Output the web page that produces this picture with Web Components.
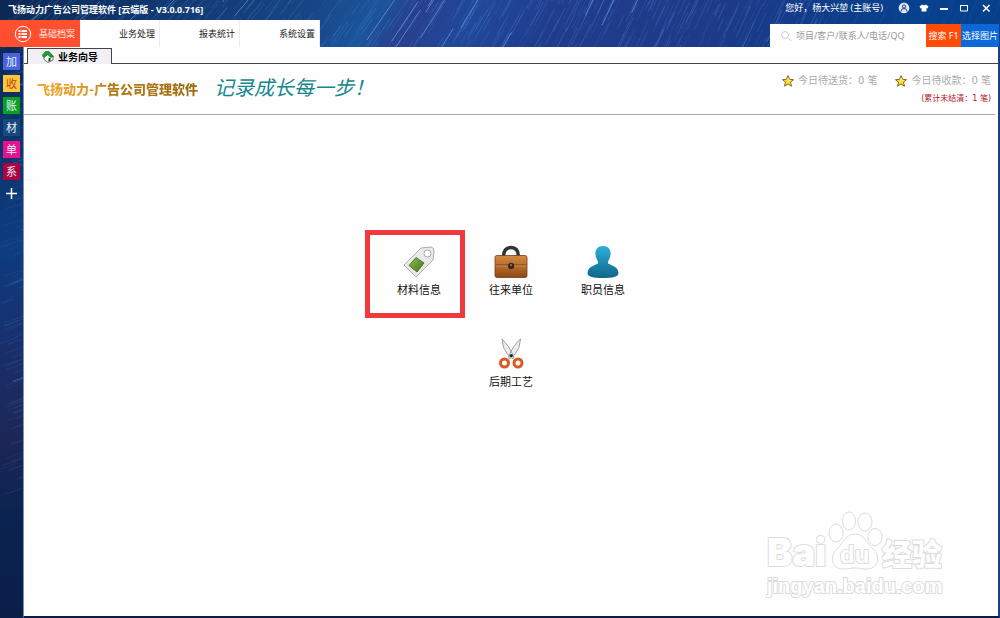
<!DOCTYPE html>
<html lang="zh-CN">
<head>
<meta charset="utf-8">
<meta name="viewport" content="width=device-width, initial-scale=1">
<title>飞扬动力广告公司管理软件</title>
<style>
  html, body { margin: 0; height: 100%; }
  body { font-family: "Noto Sans", "Noto Sans CJK SC", sans-serif; background: #0c2350; }
</style>
</head>
<body>
<app-shell></app-shell>

<template id="t-shell">
  <style>
    :host { display: flex; flex-direction: column; min-height: 100vh; overflow: hidden; }
    .body { flex: 1; display: flex; }
    main { flex: 1; display: flex; flex-direction: column; background: #fefefe; position: relative;
      border-right: 2px solid #14418c; border-bottom: 2px solid #0b1c48; border-left: 1px solid #7b8fb8; min-width: 0; }
  </style>
  <app-header></app-header>
  <div class="body">
    <side-bar></side-bar>
    <main>
      <page-tab>业务向导</page-tab>
      <page-banner></page-banner>
      <module-grid></module-grid>
      <water-mark></water-mark>
    </main>
  </div>
</template>

<template id="t-header">
  <style>
    :host { display: flex; justify-content: space-between; position: relative; color: #fff; font-size: 9px; }
    star-trails { position: absolute; inset: 0; }
    .left, .right { position: relative; display: flex; flex-direction: column; }
    h1 { margin: 0; padding-left: 8px; font: bold 9px/20px "Noto Sans", "Noto Sans CJK SC", sans-serif; white-space: nowrap; }
    nav { display: flex; }
    .right { align-items: flex-end; }
    .user { display: flex; align-items: center; height: 24px; line-height: 16px; }
    .user > span { margin: 0 11px 8px 0; white-space: nowrap; }
    .user button { all: unset; width: 20px; height: 16px; margin-bottom: 8px; display: flex; align-items: center; justify-content: center; }
    .user button:last-child { width: 24px; margin-right: 2px; }
    svg { display: block; fill: none; stroke: #fff; }
    form { display: flex; height: 23px; margin: 0 1px 0 0; }
    label { display: flex; align-items: center; gap: 4px; width: 146px; padding-left: 10px; background: #fff; }
    input { all: unset; flex: 1; min-width: 0; font-size: 9px; line-height: 23px; color: #777; }
    input::placeholder { color: #999; opacity: 1; }
    form button { all: unset; text-align: center; width: 35px; line-height: 23px; background: #ff4a08; font-size: 9px; white-space: nowrap; }
    form button + button { width: 38px; background: #0b68d6; }
  </style>
  <star-trails kind="top"></star-trails>
  <div class="left">
    <h1>飞扬动力广告公司管理软件 [云端版 - V3.0.0.716]</h1>
    <nav>
      <nav-item active>
        <svg slot="icon" width="18" height="18" viewBox="0 0 18 18" fill="none" stroke="#ffd9cf"><circle cx="9" cy="9" r="7.7"/><path d="M7.5 6h5.5M7.5 9h5.5M7.5 12h5.5" stroke-width="2" stroke="#fff"/><path d="M4.5 6h2M4.5 9h2M4.5 12h2" stroke-width="2" stroke="#fff"/></svg>基础档案</nav-item>
      <nav-item>
        <svg slot="icon" width="18" height="18" viewBox="0 0 18 18" fill="none" stroke="#e8e8ee"><circle cx="9" cy="9" r="7.5"/><path d="M4 12.5l2.5-7 2.5 7M5 10h3M10 5.500v7M10 5.500q4.500 0 4.500 3.500t-4.500 3.500"/></svg>业务处理</nav-item>
      <nav-item>
        <svg slot="icon" width="18" height="18" viewBox="0 0 18 18" fill="none" stroke="#e2e6ea"><path d="M4.500 10v5h1v-5zM8.500 7v8h1v-8zM12.500 3v12h1v-12z"/></svg>报表统计</nav-item>
      <nav-item>
        <svg slot="icon" width="18" height="18" viewBox="0 0 18 18" fill="none" stroke="#e0e2e6"><circle cx="9" cy="9" r="4.600"/><circle cx="9" cy="9" r="6" stroke-width="2" stroke-dasharray="2.300 2.400"/></svg>系统设置</nav-item>
    </nav>
  </div>
  <div class="right">
    <div class="user">
      <span>您好，杨大兴堃 (主账号)</span>
      <button aria-label="账号"><svg width="12" height="12" viewBox="0 0 12 12"><circle cx="6" cy="6" r="4.800" fill="#d9e4f5"/><circle cx="6" cy="4.500" r="1.600" stroke="#14418c"/><path d="M3 9.500q0-3 3-3t3 3" stroke="#14418c"/></svg></button>
      <button aria-label="换肤"><svg width="10" height="10" viewBox="0 0 10 10"><path d="M3 1.500q2 1.500 4 0L9.500 3.500 8.500 5.500 7.500 5v3.500h-5V5l-1 .5-1-2z" fill="#fff" stroke="none"/></svg></button>
      <button aria-label="最小化"><svg width="10" height="10" viewBox="0 0 10 10"><path d="M1 6h8" stroke-width="2"/></svg></button>
      <button aria-label="最大化"><svg width="10" height="10" viewBox="0 0 10 10"><path d="M1.500 3v5h7V3M1 2.500h8"/></svg></button>
      <button aria-label="关闭"><svg width="10" height="10" viewBox="0 0 10 10"><path d="M2 2l6.500 6.500M8.500 2L2 8.500" stroke-width="1.500"/></svg></button>
    </div>
    <form>
      <label aria-label="搜索"><svg width="12" height="12" viewBox="0 0 12 12" style="stroke:#ccc"><circle cx="5" cy="5" r="3.500"/><path d="M7.500 7.500L11 11"/></svg><input type="text" placeholder="项目/客户/联系人/电话/QQ"></label>
      <button type="button">搜索 F1</button><button type="button">选择图片</button>
    </form>
  </div>
</template>

<template id="t-nav">
  <style>
    :host { display: block; width: 80px; background: #fff; }
    button { all: unset; box-sizing: border-box; display: flex; align-items: center; gap: 7px; width: 80px; height: 27px;
      padding-left: 14px; color: #222; font-size: 9px; white-space: nowrap; border-right: 1px solid #ececf0; }
    :host([active]) { background: #ff4f2e; }
    :host([active]) button { color: #ffe9e2; border-color: #ff4f2e; }
    .label { display: block; }
  </style>
  <button><slot name="icon"></slot><span class="label"><slot></slot></span></button>
</template>

<template id="t-side">
  <style>
    :host { display: block; position: relative; width: 23px; background: linear-gradient(#0d2a5c, #0d3d80 35%, #17306f 50%, #1d2757 68%, #0b2350 82%, #0a1f48); }
    star-trails { position: absolute; inset: 0; }
    ul { position: relative; list-style: none; margin: 0; padding: 6px 0 0 3px; display: flex; flex-direction: column; gap: 5px; }
    button { all: unset; display: block; width: 17px; height: 17px; font-size: 11px; line-height: 17px; text-align: center; color: #e8f0ff; background: var(--c); }
    svg { display: block; margin: auto; }
  </style>
  <star-trails kind="side"></star-trails>
  <ul>
    <li><button style="--c:#4763df">加</button></li>
    <li><button style="--c:#fdc63f;color:#b4480c">收</button></li>
    <li><button style="--c:#07a01f">账</button></li>
    <li><button style="--c:#174a7c">材</button></li>
    <li><button style="--c:#ea118b">单</button></li>
    <li><button style="--c:#ad0340">系</button></li>
    <li><button style="--c:none" aria-label="添加"><svg width="17" height="17" viewBox="0 0 17 17"><path d="M3 8.500h11M8.500 3v11" stroke="#fff" stroke-width="1.500"/></svg></button></li>
  </ul>
</template>

<template id="t-tab">
  <style>
    :host { display: flex; height: 17px; box-sizing: border-box; padding-top: 1px; }
    i { width: 3px; border-bottom: 1px solid #444; }
    .rest { flex: 1; border-bottom: 1px solid #444; }
    button { all: unset; box-sizing: border-box; display: flex; align-items: center; gap: 4px; width: 85px; padding-left: 14px;
      border: 1px solid #444; border-bottom: 0; background: #f1f1f5; font: bold 10px/15px "Noto Sans CJK SC", sans-serif; color: #000; }
  </style>
  <i></i><button>
    <svg width="12" height="12" viewBox="0 0 12 12"><path d="M2 5.500v3l4 3 5-2.500V5L7 3z" fill="#f6faf6" stroke="#46604a" stroke-width=".8"/><path d="M0 4.500L3.500.5h3.500L11.500 5.500 9 6.500 5.500 3.500 2 6.500z" fill="#1fa52c" stroke="#0c5a18" stroke-width=".6"/><path d="M6.500 7.500l2-.7v3l-2 1z" fill="#333"/></svg>
    <slot></slot></button><div class="rest"></div>
</template>

<template id="t-banner">
  <style>
    :host { display: flex; align-items: center; height: 50px; margin-right: 3px; border-bottom: 1px solid #aaa; white-space: nowrap; }
    .brand { margin-left: 13px; font: 900 13px/20px "Noto Sans CJK SC", sans-serif; color: transparent;
      background: linear-gradient(90deg, #f2a72a, #e0982b 35%, #b77d18 42%, #9d6c12); -webkit-background-clip: text; background-clip: text; }
    .slogan { margin-left: 16px; padding-bottom: 4px; font: italic 400 20px/24px "Noto Sans CJK SC", sans-serif; color: #16868f; flex: 1; }
    .stats { display: grid; grid-template-columns: auto auto; column-gap: 18px; margin-right: 4px; align-self: flex-start; padding-top: 8px; }
    .stat { display: flex; align-items: center; gap: 4px; font: 10px/18px "DejaVu Sans", "Noto Sans CJK TC", sans-serif; color: #aaa; }
    .due { grid-column: 2; justify-self: end; color: #b8141c; font: 8px/18px "DejaVu Sans", "Noto Sans CJK TC", sans-serif; }
  </style>
  <div class="brand">飞扬动力-广告公司管理软件</div>
  <div class="slogan">记录成长每一步！</div>
  <div class="stats">
    <div class="stat"><star-icon></star-icon>今日待送货：0 笔</div>
    <div class="stat"><star-icon></star-icon>今日待收款：0 笔</div>
    <div class="due">(累计未结清：1 笔)</div>
  </div>
</template>

<template id="t-star">
  <style>:host { display: block; } svg { display: block; }</style>
  <svg width="12" height="12" viewBox="0 0 12 12"><path d="M6 .7l1.500 3.600 4 .4-3 2.500 1 4L6 9 2.500 11.200l1-4-3-2.500 4-.4z" fill="#ffdc2e" stroke="#6b5a1e" stroke-width=".9"/><path d="M5.800 3l.8 2.300 2 .2" stroke="#fff8b0" fill="none"/></svg>
</template>

<template id="t-grid">
  <style>
    :host { flex: 1; display: grid; grid-template-columns: repeat(3, 92px); grid-auto-rows: 92px; justify-content: center; padding-top: 123px; }
    .mid { grid-column: 2; }
    svg { display: block; }
  </style>
  <module-item marked>
    <svg slot="icon" width="34" height="34" viewBox="0 0 34 34"><defs><linearGradient id="g" x1="0" y1="0" x2="1" y2="1"><stop offset="0" stop-color="#8fc04e"/><stop offset="1" stop-color="#41761c"/></linearGradient></defs>
      <path d="M19 3l10-1q3 1 3 4l-1 9-17 17L2 20z" fill="#e9e9e9" stroke="#999" stroke-width=".8"/><path d="M14 12.500l8 5.500-7 9-8-6.500z" fill="url(#g)" stroke="#4a7a25" stroke-width="1" stroke-linejoin="round"/><circle cx="25.500" cy="8.500" r="3.500" fill="#fff" stroke="#aaa"/></svg>材料信息</module-item>
  <module-item>
    <svg slot="icon" width="34" height="34" viewBox="0 0 34 34"><defs><linearGradient id="b" x1="0" y1="0" x2="0" y2="1"><stop offset="0" stop-color="#d28a43"/><stop offset=".45" stop-color="#b96f2d"/><stop offset="1" stop-color="#8e4814"/></linearGradient></defs>
      <path d="M9.500 12q0-9.500 7.500-9.500t7.500 9.500" fill="none" stroke="#333" stroke-width="3.400"/><rect x="1" y="10.500" width="32" height="22" rx="2" fill="url(#b)" stroke="#713c14" stroke-width=".8"/><path d="M1.500 20h31" stroke="#7c431b"/><path d="M1.500 21h31" stroke="#db9d5e" stroke-width=".7"/><circle cx="17" cy="21" r="3.200" fill="#3c2a22"/><circle cx="17" cy="20" r="1.100" fill="#8a7a70"/></svg>往来单位</module-item>
  <module-item>
    <svg slot="icon" width="34" height="34" viewBox="0 0 34 34"><defs><linearGradient id="p" x1="0" y1="0" x2="0" y2="1"><stop offset="0" stop-color="#2fb0dc"/><stop offset=".55" stop-color="#1b87b0"/><stop offset="1" stop-color="#116687"/></linearGradient></defs>
      <path d="M17 1c6 0 8 4 7.500 9-.4 4-2.500 5-2.500 8 0 2 10.500 2.500 10.500 10 0 4-6 5-15.500 5S1.500 32 1.500 28c0-7.500 10.500-8 10.500-10 0-3-2.100-4-2.500-8C9 5 11 1 17 1z" fill="url(#p)"/></svg>职员信息</module-item>
  <module-item class="mid">
    <svg slot="icon" width="34" height="34" viewBox="0 0 34 34"><path d="M8 2q0 9 6 16l5 4 1-2Q15 8 8 2zM26.500 2q0 9-6 16l-5 4-1-2Q19 8 26.500 2z" fill="#ececec" stroke="#8c8c8c" stroke-width=".8"/><circle cx="10.500" cy="26" r="4" fill="#fff" stroke="#d95a22" stroke-width="3"/><circle cx="24" cy="26" r="4" fill="#fff" stroke="#d95a22" stroke-width="3"/><circle cx="17.300" cy="18.500" r="1.600" fill="#222"/></svg>后期工艺</module-item>
</template>

<template id="t-item">
  <style>
    :host { display: block; position: relative; }
    a { display: flex; flex-direction: column; align-items: center; padding-top: 7px; gap: 3px; font-size: 11px; line-height: 16px; color: #111; text-decoration: none; }
    .frame { display: none; }
    :host([marked]) .frame { display: block; position: absolute; box-sizing: border-box; left: -8px; top: -8px; width: 100px; height: 88px; border: 5px solid #ee3a3d; pointer-events: none; }
  </style>
  <a href="#"><slot name="icon"></slot><span><slot></slot></span></a>
  <div class="frame"></div>
</template>

<template id="t-mark">
  <style>
    :host { position: absolute; right: 46px; bottom: 14px; pointer-events: none; }
    svg { display: block; fill: #fff; stroke: #dcdcdc; }
    text { paint-order: stroke; stroke-width: 2px; stroke-linejoin: round; }
  </style>
  <svg width="186" height="92" viewBox="0 0 186 92">
    <text x="1" y="56" font-family="Inter" font-weight="900" font-size="38">Bai</text>
    <ellipse cx="70" cy="23" rx="7" ry="9"/><ellipse cx="83" cy="11" rx="6.500" ry="9"/><ellipse cx="99" cy="12" rx="7" ry="9"/><ellipse cx="109" cy="27" rx="7" ry="8.500"/>
    <path d="M89 24c9 0 11 8 18 15 9 9 4 20-6 20-6 0-7-1-12-1s-7 1-12 1c-11 0-14-12-6-20 7-7 9-15 18-15z"/>
    <text x="74" y="53" font-family="Liberation Sans" font-weight="bold" font-size="24">du</text>
    <text x="116" y="55" font-family="Noto Sans CJK SC" font-weight="900" font-size="30">经验</text>
    <text x="1" y="83" font-family="Liberation Sans" font-weight="bold" font-size="20">jingyan.baidu.com</text>
  </svg>
</template>

<script>
  const define = (name, id) => customElements.define(name, class extends HTMLElement {
    constructor() {
      super();
      this.attachShadow({ mode: 'open' }).append(document.getElementById(id).content.cloneNode(true));
    }
  });

  // Night-sky light streaks, drawn from a seeded generator so they are the same on each load.
  customElements.define('star-trails', class extends HTMLElement {
    connectedCallback() {
      const top = this.getAttribute('kind') === 'top';
      const w = top ? 1000 : 23, h = top ? 47 : 570;
      let seed = top ? 11 : 5;
      const rnd = () => (seed = (seed * 16807) % 2147483647) / 2147483647;
      let lines = '';
      const count = top ? 700 : 130;
      for (let i = 0; i < count; i++) {
        const x = rnd() * w, y = top ? rnd() * 70 - 5 : rnd() * 450;
        const deg = top ? 40 + 25 * Math.min(1, x / 600) : 20;
        const bright = rnd() > 0.95 && (!top || x < 640);
        const len = (bright ? 26 : 12) + rnd() * 25;
        const a = deg * Math.PI / 180;
        const fade = top && x > 820 ? 0.3 : 1;
        const o = ((bright ? 0.65 : 0.06 + rnd() * 0.24) * fade * (top ? 1 : 0.6)).toFixed(2);
        lines += `<path d="M${x.toFixed(1)} ${y.toFixed(1)}l${(len * Math.cos(a)).toFixed(1)} ${(-len * Math.sin(a)).toFixed(1)}" stroke="${bright ? '#6aa8f0' : '#5d92e0'}" opacity="${o}"/>`;
      }
      const bg = top ? 'linear-gradient(120deg,#0c2752,#10376e 15%,#174585 31%,#1b559c 37%,#283f8c 41%,#21489a 47%,#203c8c 55%,#1d3a88 72%,#113c88 80%,#06418e 90%,#063e88)' : 'none';
      this.attachShadow({ mode: 'open' }).innerHTML =
        `<style>:host{display:block;overflow:hidden;background:${bg}}svg{display:block;width:100%;height:100%}</style>
         <svg viewBox="0 0 ${w} ${h}" preserveAspectRatio="xMinYMin slice" aria-hidden="true">${lines}</svg>`;
    }
  });

  define('star-icon', 't-star');
  define('nav-item', 't-nav');
  define('app-header', 't-header');
  define('side-bar', 't-side');
  define('page-tab', 't-tab');
  define('page-banner', 't-banner');
  define('module-item', 't-item');
  define('module-grid', 't-grid');
  define('water-mark', 't-mark');
  define('app-shell', 't-shell');
</script>
</body>
</html>
